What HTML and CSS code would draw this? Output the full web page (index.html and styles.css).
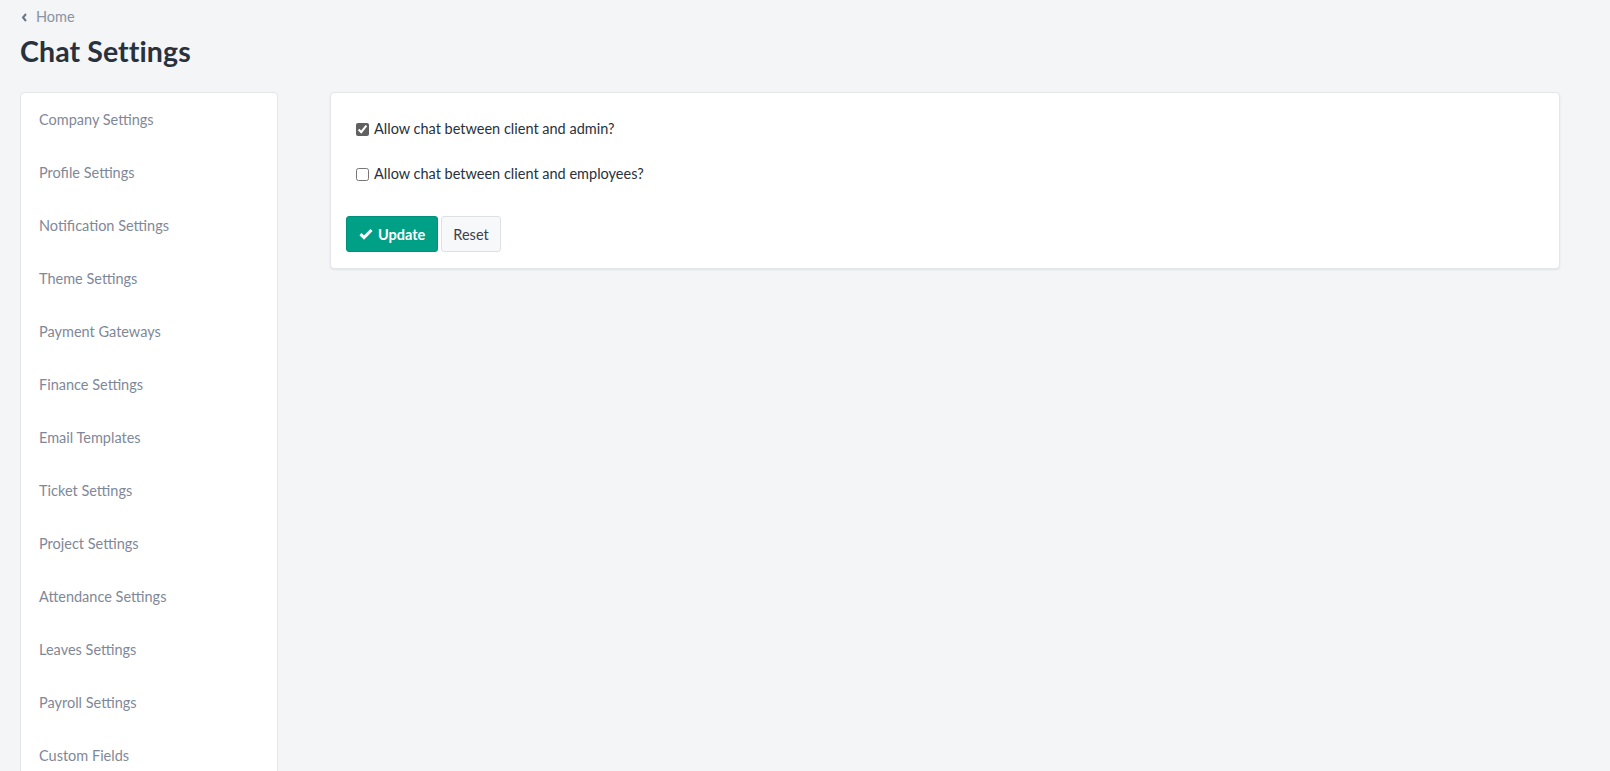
FILE: index.html
```html
<!DOCTYPE html>
<html>
<head>
<meta charset="utf-8">
<title>Chat Settings</title>
<link rel="stylesheet" href="styles.css">
</head>
<body>

<div class="page">
    <div class="crumb">
        <svg class="crumb-ico" width="7" height="9" viewBox="0 0 7 9"><path d="M5 1 L2 4.5 L5 8" fill="none" stroke="#6b7485" stroke-width="2"/></svg>
        <a href="#">Home</a>
    </div>
    <h1 class="title">Chat Settings</h1>

    <div class="cols">
        <ul class="side">
            <li><a href="#">Company Settings</a></li>
            <li><a href="#">Profile Settings</a></li>
            <li><a href="#">Notification Settings</a></li>
            <li><a href="#">Theme Settings</a></li>
            <li><a href="#">Payment Gateways</a></li>
            <li><a href="#">Finance Settings</a></li>
            <li><a href="#">Email Templates</a></li>
            <li><a href="#">Ticket Settings</a></li>
            <li><a href="#">Project Settings</a></li>
            <li><a href="#">Attendance Settings</a></li>
            <li><a href="#">Leaves Settings</a></li>
            <li><a href="#">Payroll Settings</a></li>
            <li><a href="#">Custom Fields</a></li>
        </ul>

        <div class="main">
            <form class="card">
                <label class="chk"><input type="checkbox" checked> Allow chat between client and admin?</label>
                <label class="chk"><input type="checkbox"> Allow chat between client and employees?</label>
                <div class="btns">
                    <button type="button" class="btn btn-ok">
                        <svg width="14" height="12" viewBox="0 0 14 12"><path d="M1.5 6.2 L5 9.6 L12.5 2" fill="none" stroke="#fff" stroke-width="3"/></svg>
                        Update
                    </button>
                    <button type="reset" class="btn btn-reset">Reset</button>
                </div>
            </form>
        </div>
    </div>
</div>

</body>
</html>
```

FILE: styles.css
```css
body,h1,ul,li{margin:0;padding:0;}
li{list-style:none;}
a{text-decoration:none;}
body{background:#f4f5f7;font:14.5px/1.4 Lato,"Open Sans",sans-serif;color:#28313c;overflow:hidden;}

.page{padding:8px 50px 0 20px;}
.crumb{display:flex;align-items:center;gap:8px;height:18px;padding-left:1px;}
.crumb a{color:#8a93a3;font-size:14.5px;}
.title{font-size:28.5px;font-weight:700;color:#28313c;line-height:34px;margin:8px 0 24px;letter-spacing:0.1px;}

.cols{display:grid;grid-template-columns:258px 1fr;gap:52px;align-items:start;}

.side{background:#fff;border:1px solid #e3e6ea;border-radius:4px;padding-bottom:60px;}
.side li{height:53px;line-height:53px;padding:0 18px;}
.side a{color:#7f8899;font-size:14.5px;}

.card{background:#fff;border:1px solid #e3e6ea;border-radius:4px;box-shadow:0 1px 2px rgba(0,0,0,.08);padding:25px 15px 16px;}
.chk{display:flex;align-items:center;height:22px;padding-left:10px;margin-bottom:23px;font-size:14.5px;color:#28313c;}
.chk input{width:13px;height:13px;margin:0 5px 0 0;accent-color:#606060;}
.btns{display:flex;gap:3px;margin-top:31px;}
.btn{height:36px;border-radius:3px;font:14.5px Lato,"Open Sans",sans-serif;cursor:pointer;display:flex;align-items:center;gap:5px;}
.btn-ok{background:#00a086;border:1px solid #00917a;color:#fff;font-weight:700;padding:0 12px;}
.btn-reset{background:#f7f8fa;border:1px solid #dde0e5;color:#3a424d;padding:0 11px;}
```
